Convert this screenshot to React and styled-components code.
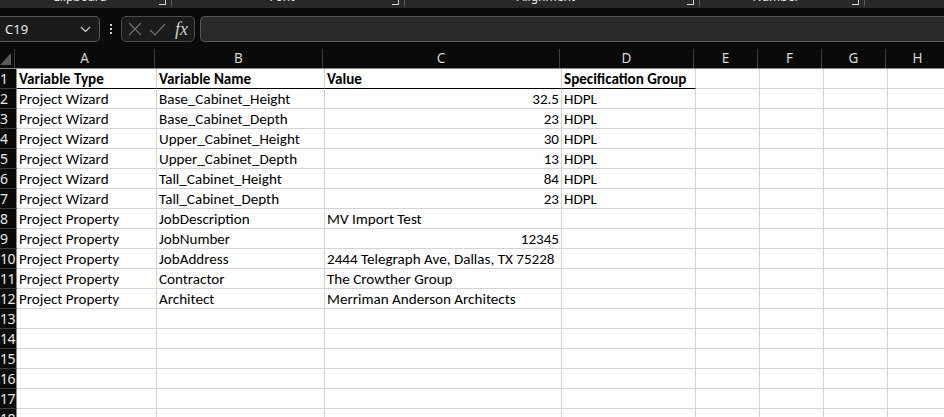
import React from 'react'
import styled, { createGlobalStyle } from 'styled-components'

const GlobalStyle = createGlobalStyle`
    html, body {
        margin: 0;
        padding: 0;
        background: #0a0a0a;
        overflow: hidden;
    }
`;

const columns = [
    { key: 'A', width: 140 },
    { key: 'B', width: 168 },
    { key: 'C', width: 237 },
    { key: 'D', width: 134 },
    { key: 'E', width: 64 },
    { key: 'F', width: 64 },
    { key: 'G', width: 64 },
    { key: 'H', width: 64 },
];

const rows = [
    ['Variable Type', 'Variable Name', 'Value', 'Specification Group'],
    ['Project Wizard', 'Base_Cabinet_Height', 32.5, 'HDPL'],
    ['Project Wizard', 'Base_Cabinet_Depth', 23, 'HDPL'],
    ['Project Wizard', 'Upper_Cabinet_Height', 30, 'HDPL'],
    ['Project Wizard', 'Upper_Cabinet_Depth', 13, 'HDPL'],
    ['Project Wizard', 'Tall_Cabinet_Height', 84, 'HDPL'],
    ['Project Wizard', 'Tall_Cabinet_Depth', 23, 'HDPL'],
    ['Project Property', 'JobDescription', 'MV Import Test'],
    ['Project Property', 'JobNumber', 12345],
    ['Project Property', 'JobAddress', '2444 Telegraph Ave, Dallas, TX 75228'],
    ['Project Property', 'Contractor', 'The Crowther Group'],
    ['Project Property', 'Architect', 'Merriman Anderson Architects'],
    [], [], [], [], [], [],
];

const groups = [
    { label: 'Clipboard', width: 172 },
    { label: 'Font', width: 233 },
    { label: 'Alignment', width: 295 },
    { label: 'Number', width: 165 },
];

export default function App() {
    return (
        <>
            <GlobalStyle />
            <Page>
                <Ribbon>
                    {groups.map(g => (
                        <Group key={g.label} $width={g.width}>
                            <GroupLabel>{g.label}</GroupLabel>
                            <Launcher />
                            <GroupSep />
                        </Group>
                    ))}
                </Ribbon>

                <FormulaBar>
                    <NameBox>
                        <span>C19</span>
                        <svg width="11" height="7" viewBox="0 0 11 7">
                            <path d="M1 1 L5.5 5.5 L10 1" fill="none" stroke="#d0d0d0" strokeWidth="1.2" />
                        </svg>
                    </NameBox>
                    <Dots>
                        <i /><i /><i />
                    </Dots>
                    <FxBox>
                        <svg width="14" height="14" viewBox="0 0 14 14">
                            <path d="M1 1 L13 13 M13 1 L1 13" stroke="#6e6e6e" strokeWidth="1.2" />
                        </svg>
                        <svg width="17" height="13" viewBox="0 0 17 13">
                            <path d="M1 7 L6 12 L16 1" fill="none" stroke="#6e6e6e" strokeWidth="1.2" />
                        </svg>
                        <Fx>fx</Fx>
                    </FxBox>
                    <FormulaInput />
                </FormulaBar>

                <Sheet>
                    <HeaderRow>
                        <Corner>
                            <svg width="11" height="12" viewBox="0 0 11 12">
                                <path d="M11 0 L11 12 L0 12 Z" fill="#5a5a5a" />
                            </svg>
                        </Corner>
                        {columns.map(c => (
                            <ColHead key={c.key} $width={c.width}>{c.key}</ColHead>
                        ))}
                    </HeaderRow>
                    {rows.map((r, i) => (
                        <Row key={i}>
                            <RowHead>{i + 1}</RowHead>
                            {columns.map((c, j) => {
                                const v = r[j];
                                const isNum = typeof v === 'number';
                                return (
                                    <Cell
                                        key={c.key}
                                        $width={c.width}
                                        $bold={i === 0}
                                        $num={isNum}
                                        $underline={i === 0 && j < 4}
                                    >
                                        {v}
                                    </Cell>
                                );
                            })}
                        </Row>
                    ))}
                </Sheet>
            </Page>
        </>
    )
}

const Page = styled.div`
    width: 944px;
    height: 417px;
    overflow: hidden;
    background: #0a0a0a;
    display: flex;
    flex-direction: column;
`;

const Ribbon = styled.div`
    height: 8px;
    background: #292929;
    display: flex;
    overflow: hidden;
    flex-shrink: 0;
`;

const Group = styled.div`
    width: ${p => p.$width}px;
    display: flex;
    align-items: flex-start;
`;

const GroupLabel = styled.div`
    flex: 1;
    text-align: center;
    font-family: "Noto Sans", sans-serif;
    font-size: 12px;
    line-height: 16px;
    margin-top: -11px;
    color: #e6e6e6;
`;

const Launcher = styled.div`
    width: 6px;
    height: 4px;
    border-right: 1px solid #d0d0d0;
    border-bottom: 1px solid #d0d0d0;
    margin-right: 5px;
`;

const GroupSep = styled.div`
    width: 1px;
    height: 6px;
    background: #5a5a5a;
`;

const FormulaBar = styled.div`
    margin-top: 8px;
    height: 26px;
    display: flex;
    align-items: stretch;
    flex-shrink: 0;
`;

const NameBox = styled.div`
    width: 100px;
    box-sizing: border-box;
    border: 1px solid #575757;
    border-left: none;
    border-radius: 0 5px 5px 0;
    background: #1b1b1b;
    display: flex;
    align-items: center;
    justify-content: space-between;
    padding: 0 8px 0 5px;
    font-family: "Noto Sans", sans-serif;
    font-size: 13px;
    color: #e8e8e8;
`;

const Dots = styled.div`
    width: 21px;
    display: flex;
    flex-direction: column;
    align-items: center;
    justify-content: center;
    gap: 2px;

    i {
        width: 2px;
        height: 2px;
        background: #d0d0d0;
    }
`;

const FxBox = styled.div`
    width: 74px;
    box-sizing: border-box;
    border: 1px solid #4a4a4a;
    border-radius: 5px;
    background: #1b1b1b;
    display: flex;
    align-items: center;
    gap: 7px;
    padding: 0 4px 0 6px;
`;

const Fx = styled.span`
    font-family: "Liberation Serif", serif;
    font-style: italic;
    font-size: 18px;
    color: #cfcfcf;
    margin-left: 2px;
`;

const FormulaInput = styled.div`
    flex: 1;
    margin-left: 5px;
    box-sizing: border-box;
    border: 1px solid #575757;
    border-right: none;
    border-radius: 5px 0 0 5px;
    background: #2a2a2a;
`;

const Sheet = styled.div`
    margin-top: 7px;
    display: flex;
    flex-direction: column;
`;

const HeaderRow = styled.div`
    display: flex;
    height: 20px;
    background: #0a0a0a;
    border-bottom: 1px solid #8a8a8a;
    box-sizing: border-box;
`;

const Corner = styled.div`
    width: 17px;
    box-sizing: border-box;
    border-right: 1px solid #3e3e3e;
    display: flex;
    align-items: flex-end;
    justify-content: flex-end;
    padding: 0 3px 3px 0;
`;

const ColHead = styled.div`
    width: ${p => p.$width}px;
    flex-shrink: 0;
    box-sizing: border-box;
    border-right: 1px solid #3e3e3e;
    text-align: center;
    font-family: "Noto Sans", sans-serif;
    font-size: 13.5px;
    line-height: 19px;
    color: #d6d6d6;
`;

const Row = styled.div`
    display: flex;
    height: 20px;
`;

const RowHead = styled.div`
    width: 17px;
    flex-shrink: 0;
    box-sizing: border-box;
    background: #0a0a0a;
    border-right: 1px solid #8a8a8a;
    border-bottom: 1px solid #3a3a3a;
    font-family: "Noto Sans", sans-serif;
    font-size: 14px;
    line-height: 20px;
    color: #e6e6e6;
    white-space: nowrap;
    overflow: hidden;
    letter-spacing: -0.5px;
`;

const Cell = styled.div`
    width: ${p => p.$width}px;
    flex-shrink: 0;
    box-sizing: border-box;
    background: #ffffff;
    border-right: 1px solid #d4d4d4;
    border-bottom: 1px solid ${p => p.$underline ? '#000000' : '#d4d4d4'};
    font-family: "Carlito", "Lato", sans-serif;
    font-size: 15.1px;
    line-height: 20px;
    font-weight: ${p => p.$bold ? 700 : 400};
    color: #000;
    text-align: ${p => p.$num ? 'right' : 'left'};
    padding: 0 2px;
    white-space: nowrap;
`;
